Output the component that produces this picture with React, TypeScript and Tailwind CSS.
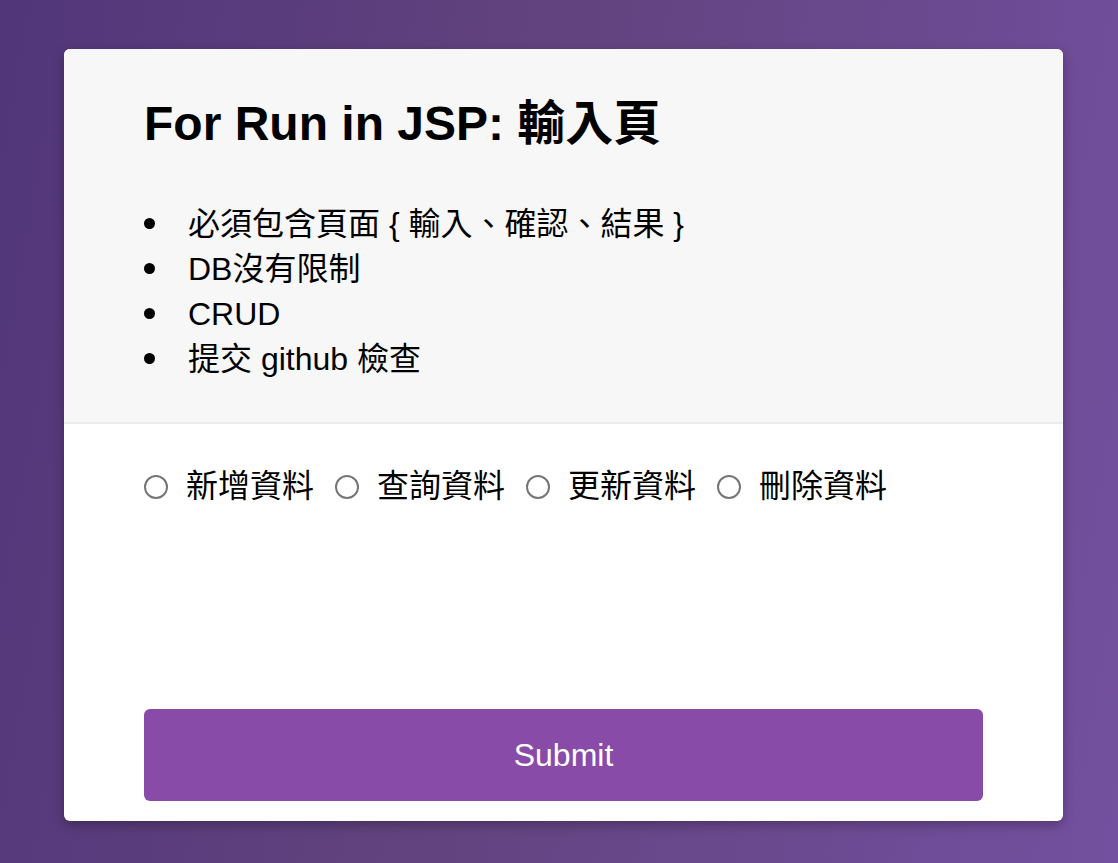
import React from 'react';

const font = { fontFamily: '"Liberation Sans", "Noto Sans CJK TC", sans-serif' };

const items = ['必須包含頁面 { 輸入、確認、結果 }', 'DB沒有限制', 'CRUD', '提交 github 檢查'];
const actions = ['新增資料', '查詢資料', '更新資料', '刪除資料'];

const App: React.FC = () => {
  return (
    <div
      className="min-h-screen w-full bg-[linear-gradient(100deg,#51367a_0%,#62437f_45%,#7450a0_100%)] pl-[64px] pt-[49px] pb-[43px] text-black"
      style={font}
    >
      <form className="w-[999px] rounded-[6px] bg-white shadow-[0_4px_12px_rgba(0,0,0,0.28)] overflow-hidden">
        {/* Header */}
        <div className="bg-[#f7f7f7] border-b-2 border-[#ececec] px-[80px] pt-[47px] pb-[40px]">
          <h1 className="text-[48px] leading-[56px] font-bold">For Run in JSP: 輸入頁</h1>
          <ul className="mt-[50px]">
            {items.map((t) => (
              <li key={t} className="flex items-center text-[32px] leading-[45px]">
                <span className="w-[11px] h-[11px] rounded-full bg-black shrink-0 mr-[33px] -mt-[2px]" />
                <span>{t}</span>
              </li>
            ))}
          </ul>
        </div>

        {/* Options */}
        <div className="px-[80px] pt-[40px] pb-[20px]">
          <div className="flex items-center gap-[21px]">
            {actions.map((a) => (
              <label key={a} className="flex items-center gap-[18px] text-[32px] leading-[45px] cursor-pointer">
                <input
                  type="radio"
                  name="action"
                  value={a}
                  className="appearance-none w-[24px] h-[24px] m-0 rounded-full border-2 border-[#767676] bg-white shrink-0"
                />
                <span>{a}</span>
              </label>
            ))}
          </div>

          <button
            type="button"
            className="mt-[200px] w-full h-[92px] rounded-[6px] bg-[#884ba8] text-white text-[32px]"
          >
            Submit
          </button>
        </div>
      </form>
    </div>
  );
};

export default App;
